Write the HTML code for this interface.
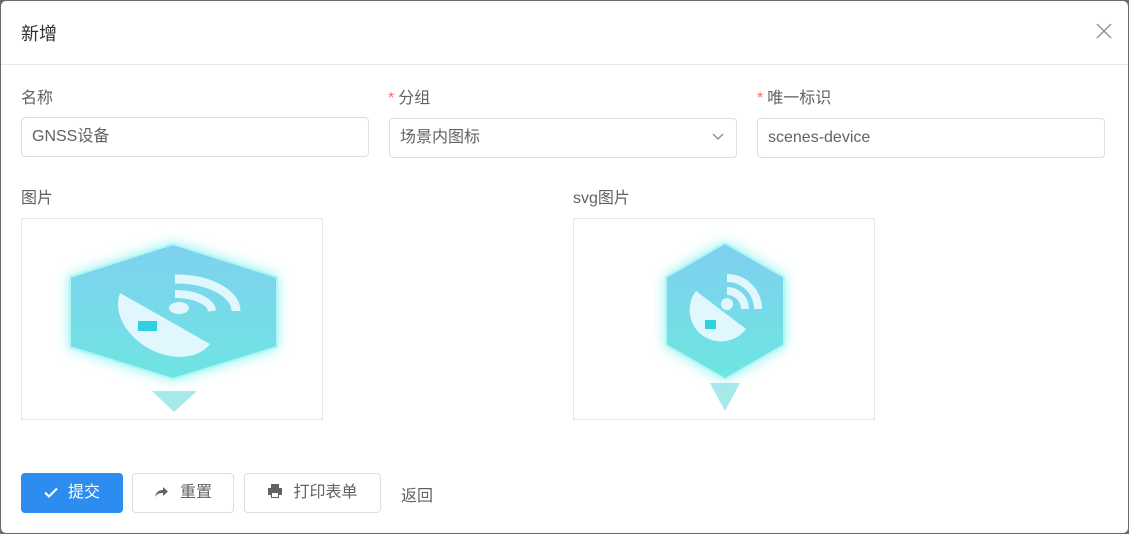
<!DOCTYPE html>
<html><head><meta charset="utf-8"><style>
*{box-sizing:border-box;margin:0;padding:0}
body{width:1129px;height:534px;background:#6b6b6b;font-family:"Liberation Sans","Noto Sans CJK SC",sans-serif;overflow:hidden;position:relative}
.dlg{position:absolute;left:1px;top:1px;width:1127px;height:532px;background:#fff;border-radius:5px}
.hd{height:64px;border-bottom:1px solid #e8e8e8;position:relative}
.t{position:absolute;left:20px;top:19px;font-size:18px;color:#303133}
.x{position:absolute;right:16px;top:22px}
.lbl{position:absolute;font-size:16px;color:#606266}
.req{color:#f56c6c;margin-right:4px}
.in{position:absolute;height:40px;border:1px solid #dcdfe6;border-radius:4px;font-size:16px;color:#606266;padding:0 10px;line-height:38px}
.img{position:absolute;width:302px;height:202px;border:1px solid #e4e7ed;top:217px}
.btn{position:absolute;top:472px;height:40px;border:1px solid #dcdfe6;border-radius:4px;font-size:16px;color:#606266;line-height:38px;text-align:center}
</style></head><body>
<div class="dlg">
<div class="hd"><div class="t">新增</div>
<svg class="x" width="16" height="16" viewBox="0 0 16 16"><path d="M1 1L15 15M15 1L1 15" stroke="#909399" stroke-width="1.5"/></svg></div>
<div class="lbl" style="left:20px;top:83px">名称</div>
<div class="lbl" style="left:387px;top:83px"><span class="req">*</span>分组</div>
<div class="lbl" style="left:756px;top:83px"><span class="req">*</span>唯一标识</div>
<div class="in" style="left:20px;top:116px;width:348px">GNSS设备</div>
<div class="in" style="left:388px;top:117px;width:348px">场景内图标
<svg style="position:absolute;right:12px;top:14px" width="12" height="8" viewBox="0 0 12 8"><path d="M1 1L6 6L11 1" stroke="#909399" stroke-width="1.5" fill="none"/></svg></div>
<div class="in" style="left:756px;top:117px;width:348px">scenes-device</div>
<div class="lbl" style="left:20px;top:183px">图片</div>
<div class="lbl" style="left:572px;top:183px">svg图片</div>
<div class="img" style="left:20px">
<svg width="300" height="200" viewBox="0 0 300 200"><defs><filter id="g"><feGaussianBlur stdDeviation="7"/></filter>
<linearGradient id="h" x1="0" y1="0" x2="0" y2="1"><stop offset="0" stop-color="#7fd1ef"/><stop offset="1" stop-color="#6ee4e2"/></linearGradient></defs>
<polygon points="151,25 255,58 255,128 151,160 48,128 48,58" fill="#7ff0ee" filter="url(#g)"/>
<polygon points="151,25 255,58 255,128 151,160 48,128 48,58" fill="url(#h)" stroke="#aef7f5" stroke-width="2"/>
<path d="M98,74 L188,125 A52,38 29.5 0 1 98,74Z" fill="#e0f8fd"/>
<rect x="116" y="102" width="19" height="10" fill="#2fd0e0"/>
<ellipse cx="157" cy="89" rx="10" ry="6" fill="#e0f8fd"/>
<path d="M153,60 A60,32 0 0 1 214,92" stroke="#e0f8fd" stroke-width="9" fill="none"/>
<path d="M153,75 A36,18 0 0 1 190,92" stroke="#e0f8fd" stroke-width="8" fill="none"/>
<polygon points="130,172 175,172 152,193" fill="#8ee3e6" opacity=".8"/>
</svg></div>
<div class="img" style="left:572px">
<svg width="300" height="200" viewBox="0 0 300 200"><defs><linearGradient id="h2" x1="0" y1="0" x2="0" y2="1"><stop offset="0" stop-color="#7fcff0"/><stop offset="1" stop-color="#6de6e0"/></linearGradient></defs>
<polygon points="151,24 210,58 210,126 151,160 92,126 92,58" fill="#7ff0ee" filter="url(#g)"/>
<polygon points="151,24 210,58 210,126 151,160 92,126 92,58" fill="url(#h2)" stroke="#aef7f5" stroke-width="2"/>
<path d="M122,72 L172,110 A31,31 0 0 1 122,72Z" fill="#e0f8fd"/>
<rect x="131" y="101" width="11" height="9" fill="#2fd0e0"/>
<circle cx="153" cy="85" r="6" fill="#e0f8fd"/>
<path d="M153,55 A35,35 0 0 1 188,90 L180,90 A27,27 0 0 0 153,63Z M153,68 A22,22 0 0 1 175,90 L167,90 A14,14 0 0 0 153,76Z" fill="#e0f8fd"/>
<polygon points="136,164 166,164 151,192" fill="#8ee3e6" opacity=".8"/>
</svg></div>
<div class="btn" style="left:20px;width:102px;background:#2d8cf0;border-color:#2d8cf0;color:#fff">
<svg style="vertical-align:-1px;margin-right:10px" width="14" height="11" viewBox="0 0 14 11"><path d="M1 5.5L5 9.5L13 1.5" stroke="#fff" stroke-width="2" fill="none"/></svg>提交</div>
<div class="btn" style="left:131px;width:102px">
<svg style="vertical-align:-1px;margin-right:12px" width="14" height="12" viewBox="0 0 14 12"><path d="M1 11C2 6 5 4 9 4V1L14 5.5L9 10V7C5 7 3 8 1 11Z" fill="#606266"/></svg>重置</div>
<div class="btn" style="left:243px;width:137px">
<svg style="vertical-align:-1px;margin-right:10px" width="16" height="14" viewBox="0 0 16 14"><path d="M4 0H12V4H4Z M1 4H15V11H12V14H4V11H1Z" fill="#606266"/><rect x="5" y="9" width="6" height="4" fill="#fff"/></svg>打印表单</div>
<div class="lbl" style="left:400px;top:481px">返回</div>
</div>
</body></html>
